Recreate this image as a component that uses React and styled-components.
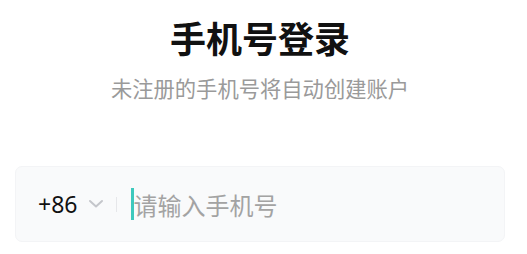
import React from 'react';
import styled, { createGlobalStyle } from 'styled-components';

const Global = createGlobalStyle`
  html, body {
    margin: 0;
    padding: 0;
    background: #ffffff;
    font-family: "Noto Sans CJK SC", "Noto Sans", sans-serif;
  }
`;

const Page = styled.div`
  width: 527px;
  height: 254px;
  box-sizing: border-box;
  padding: 15px 22px 0 15px;
  display: flex;
  flex-direction: column;
  align-items: stretch;
`;

const Title = styled.h1`
  margin: 0;
  text-align: center;
  font-size: 36px;
  line-height: 44px;
  font-weight: 700;
  color: #111111;
`;

const Subtitle = styled.p`
  margin: 15px 0 0;
  text-align: center;
  font-size: 21.3px;
  line-height: 28px;
  color: #9a9a9a;
`;

const Field = styled.div`
  margin-top: 64px;
  height: 74px;
  display: flex;
  align-items: center;
  padding: 0 0 0 22px;
  background: #f9fafb;
  border: 1px solid #f3f4f6;
  border-radius: 7px;
`;

const Code = styled.span`
  font-family: "Noto Sans", "Noto Sans CJK SC", sans-serif;
  font-size: 23px;
  color: #111111;
`;

const Chevron = styled.svg`
  margin-left: 11px;
  width: 16px;
  height: 10px;
`;

const Divider = styled.span`
  width: 1px;
  height: 15px;
  margin-left: 12px;
  background: #e6e7ea;
`;

const Caret = styled.span`
  margin-left: 14px;
  width: 3px;
  height: 32px;
  background: #3ec9bd;
`;

const Placeholder = styled.span`
  margin-left: -1px;
  font-size: 24px;
  color: #a3a3a3;
`;

export default function App() {
  return (
    <>
      <Global />
      <Page>
        <Title>手机号登录</Title>
        <Subtitle>未注册的手机号将自动创建账户</Subtitle>
        <Field>
          <Code>+86</Code>
          <Chevron viewBox="0 0 16 10">
            <path d="M2 2 L8 7.5 L14 2" fill="none" stroke="#c4c6cb" strokeWidth="2" strokeLinecap="round" strokeLinejoin="round" />
          </Chevron>
          <Divider />
          <Caret />
          <Placeholder>请输入手机号</Placeholder>
        </Field>
      </Page>
    </>
  );
}
